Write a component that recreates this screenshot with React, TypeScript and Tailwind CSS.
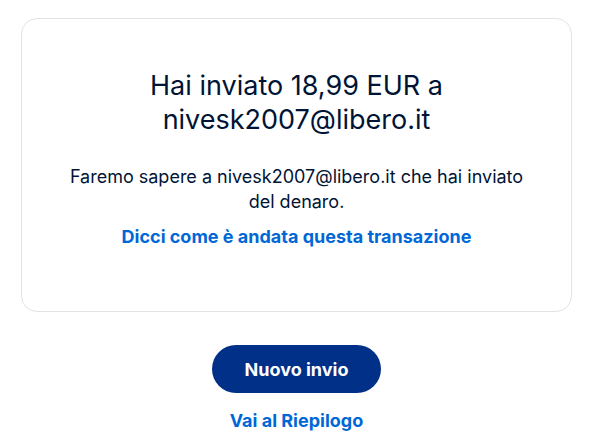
export default function App() {
  return (
    <div className="min-h-screen bg-white px-[21px] pt-[18px]" style={{ fontFamily: 'Inter, "Noto Sans", sans-serif' }}>
      <div className="w-[551px] h-[294px] rounded-[16px] border border-[#e3e3e3] flex flex-col items-center pt-[50px]">
        <h1 className="text-[27px] leading-[34px] text-[#001435] text-center font-normal w-[360px]">
          Hai inviato 18,99 EUR a nivesk2007@libero.it
        </h1>
        <p className="mt-[27px] text-[18px] leading-[25px] text-[#001435] text-center w-[470px]">
          Faremo sapere a nivesk2007@libero.it che hai inviato del denaro.
        </p>
        <a className="mt-[10px] text-[18px] leading-[25px] font-bold text-[#0067d6]">Dicci come è andata questa transazione</a>
      </div>
      <div className="flex flex-col items-center mt-[33px] w-[551px]">
        <button className="w-[169px] h-[48px] rounded-full bg-[#003087] text-white text-[18px] font-bold">Nuovo invio</button>
        <a className="mt-[15px] text-[18px] leading-[25px] font-bold text-[#0067d6]">Vai al Riepilogo</a>
      </div>
    </div>
  );
}
